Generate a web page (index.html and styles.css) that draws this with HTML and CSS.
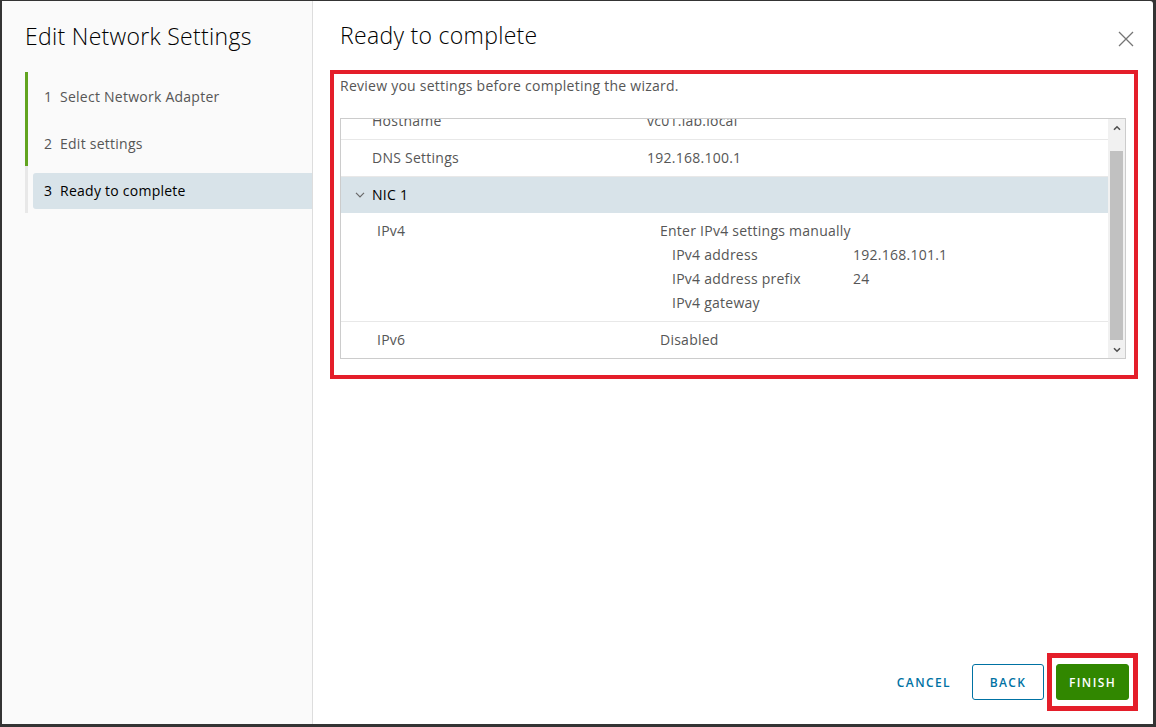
FILE: index.html
```html
<!DOCTYPE html>
<html lang="en">
<head>
  <meta charset="UTF-8">
  <meta name="viewport" content="width=device-width, initial-scale=1.0">
  <title>Edit Network Settings</title>
  <link rel="stylesheet" href="styles.css">
</head>
<body>
  <div class="modal">
    <!-- Pasos del asistente -->
    <aside class="sidebar">
      <h2 class="wizard-title">Edit Network Settings</h2>
      <ol class="steps">
        <li class="step done"><span class="step-label">1&nbsp; Select Network Adapter</span></li>
        <li class="step done"><span class="step-label">2&nbsp; Edit settings</span></li>
        <li class="step current"><span class="step-label">3&nbsp; Ready to complete</span></li>
      </ol>
    </aside>

    <main class="content">
      <header class="content-header">
        <h3 class="page-title">Ready to complete</h3>
        <button class="close-button" aria-label="Close">
          <svg width="16" height="16" viewBox="0 0 16 16">
            <path d="M1 1 L15 15 M15 1 L1 15" stroke="#757575" stroke-width="1.3" fill="none"/>
          </svg>
        </button>
      </header>

      <section class="highlight review">
        <p class="intro">Review you settings before completing the wizard.</p>
        <div class="summary">
          <div class="summary-view">
            <div class="summary-rows">
              <div class="row">
                <span class="key">Hostname</span>
                <span class="value">vc01.lab.local</span>
              </div>
              <div class="row">
                <span class="key">DNS Settings</span>
                <span class="value">192.168.100.1</span>
              </div>
              <div class="row group">
                <svg class="chevron" width="10" height="6" viewBox="0 0 10 6">
                  <path d="M1 0.8 L5 4.8 L9 0.8" stroke="#6a6a6a" stroke-width="1.2" fill="none"/>
                </svg>
                <span>NIC 1</span>
              </div>
              <div class="row nested tall">
                <span class="key">IPv4</span>
                <div class="value">
                  <div class="line">Enter IPv4 settings manually</div>
                  <div class="sub"><span>IPv4 address</span><span>192.168.101.1</span></div>
                  <div class="sub"><span>IPv4 address prefix</span><span>24</span></div>
                  <div class="sub"><span>IPv4 gateway</span><span></span></div>
                </div>
              </div>
              <div class="row nested last">
                <span class="key">IPv6</span>
                <span class="value">Disabled</span>
              </div>
            </div>
          </div>
          <div class="scrollbar">
            <span class="scroll-arrow">
              <svg width="8" height="6" viewBox="0 0 8 6"><path d="M1 4.8 L4 1.8 L7 4.8" stroke="#505050" stroke-width="1.6" fill="none"/></svg>
            </span>
            <span class="scroll-track"><span class="scroll-thumb"></span></span>
            <span class="scroll-arrow">
              <svg width="8" height="6" viewBox="0 0 8 6"><path d="M1 1.2 L4 4.2 L7 1.2" stroke="#505050" stroke-width="1.6" fill="none"/></svg>
            </span>
          </div>
        </div>
      </section>

      <footer class="actions">
        <button class="btn btn-flat">CANCEL</button>
        <button class="btn btn-outline">BACK</button>
        <div class="highlight finish-box">
          <button class="btn btn-success">FINISH</button>
        </div>
      </footer>
    </main>
  </div>
</body>
</html>
```

FILE: styles.css
```css
html, body {
  height: 100%;
}
body {
  margin: 0;
  background-color: #343434;
  font-family: 'Open Sans', 'Liberation Sans', sans-serif;
  font-size: 14px;
  letter-spacing: 0.25px;
  color: #565656;
}
.modal {
  display: flex;
  height: calc(100% - 4px);
  margin: 1px 3px 3px 2px;
  background-color: #ffffff;
  border-radius: 0 3px 0 0;
  overflow: hidden;
}

/* Barra lateral */
.sidebar {
  width: 310px;
  flex-shrink: 0;
  background-color: #fafafa;
  border-right: 1px solid #dddddd;
}
.wizard-title {
  margin: 23px 0 24px 23px;
  font-size: 23px;
  line-height: 24px;
  font-weight: 300;
  letter-spacing: 0.3px;
  color: #000000;
}
.steps {
  list-style: none;
  margin: 0 0 0 23px;
  padding: 0;
}
.step {
  height: 47px;
  padding-top: 7px;
  box-sizing: border-box;
  border-left: 3px solid #e8e8e8;
}
.step.done {
  border-left-color: #62a420;
}
.step-label {
  display: block;
  height: 36px;
  line-height: 36px;
  margin-left: 5px;
  padding-left: 11px;
  border-radius: 3px 0 0 3px;
}
.step.current .step-label {
  background-color: #d8e3e9;
  color: #000000;
  font-weight: 500;
}

/* Contenido */
.content {
  flex: 1;
  display: flex;
  flex-direction: column;
  min-width: 0;
}
.content-header {
  display: flex;
  justify-content: space-between;
  align-items: flex-start;
  padding: 22px 19px 0 27px;
}
.page-title {
  margin: 0;
  font-size: 23px;
  line-height: 24px;
  font-weight: 300;
  letter-spacing: 0.3px;
  color: #000000;
}
.close-button {
  margin-top: 8px;
  padding: 0;
  border: none;
  background: none;
  line-height: 0;
}
.highlight {
  border: 4px solid #e41e2a;
}
.review {
  margin: 23px 15px 0 17px;
  padding: 2px 8px 16px 6px;
}
.intro {
  margin: 0 0 22px;
  line-height: 20px;
}
.summary {
  display: flex;
  height: 239px;
  border: 1px solid #cccccc;
}
.summary-view {
  flex: 1;
  overflow: hidden;
}
.summary-rows {
  margin-top: -16px;
}
.row {
  display: grid;
  grid-template-columns: 275px 1fr;
  align-items: start;
  height: 36px;
  line-height: 36px;
  padding-left: 31px;
  border-bottom: 1px solid #e8e8e8;
}
.row.group {
  display: flex;
  align-items: center;
  gap: 7px;
  padding-left: 14px;
  background-color: #d8e3e9;
  border-bottom: none;
  color: #000000;
  font-weight: 500;
}
.row.nested {
  grid-template-columns: 283px 1fr;
  padding-left: 36px;
}
.row.tall {
  height: auto;
  padding-top: 6px;
  padding-bottom: 6px;
  line-height: 24px;
}
.row.last {
  border-bottom: none;
}
.sub {
  display: grid;
  grid-template-columns: 181px 1fr;
  padding-left: 12px;
}
.scrollbar {
  width: 17px;
  display: flex;
  flex-direction: column;
  background-color: #f1f1f1;
}
.scroll-arrow {
  height: 17px;
  display: flex;
  align-items: center;
  justify-content: center;
}
.scroll-track {
  flex: 1;
  padding: 15px 2px 0 2px;
}
.scroll-thumb {
  display: block;
  height: 189px;
  background-color: #c1c1c1;
}

/* Botones */
.actions {
  margin-top: auto;
  display: flex;
  justify-content: flex-end;
  align-items: center;
  gap: 8px;
  padding: 0 15px 13px 0;
}
.btn {
  height: 36px;
  padding: 0 12px;
  font-family: inherit;
  font-size: 12px;
  font-weight: 600;
  letter-spacing: 1.4px;
  border-radius: 3px;
  border: 1px solid transparent;
  background: none;
  color: #0072a3;
}
.btn-outline {
  width: 72px;
  margin-right: -5px;
  border-color: #0072a3;
}
.btn-success {
  width: 73px;
  background-color: #318700;
  border-color: #318700;
  color: #ffffff;
}
.finish-box {
  border-width: 5px;
  padding: 6px 4px;
  line-height: 0;
}
```
